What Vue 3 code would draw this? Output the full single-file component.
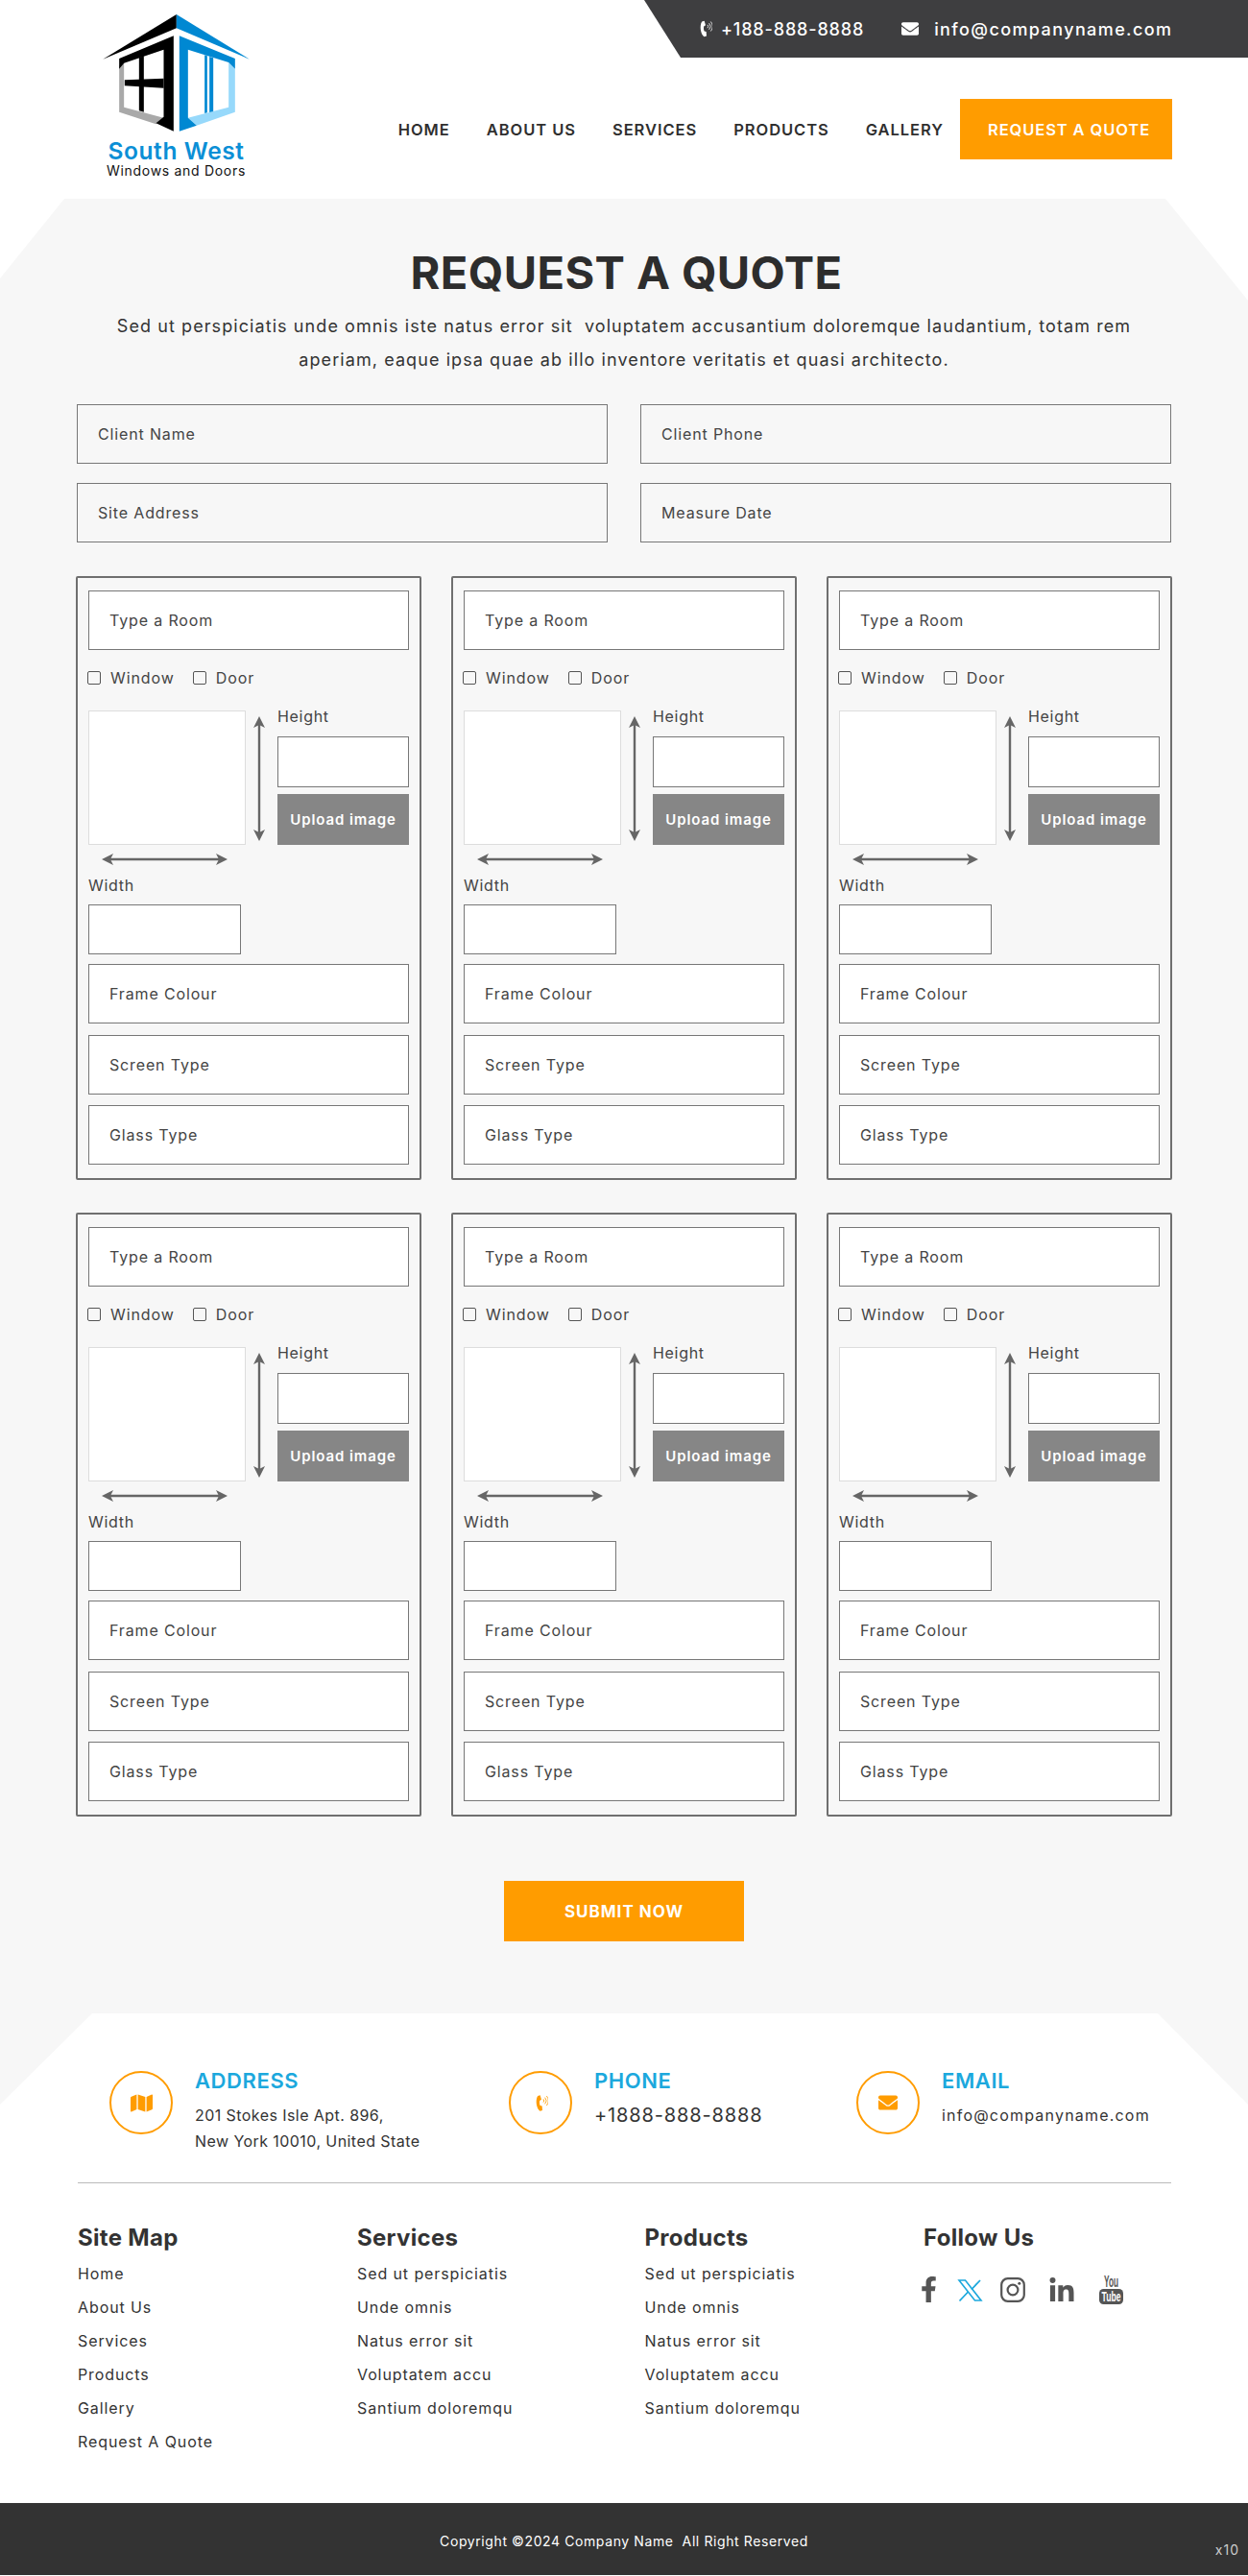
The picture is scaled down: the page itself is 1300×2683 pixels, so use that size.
<script setup>
const navItems = ["HOME", "ABOUT US", "SERVICES", "PRODUCTS", "GALLERY"];
const rooms = [1, 2, 3, 4, 5, 6];
const footerCols = [
  { title: "Site Map", links: ["Home", "About Us", "Services", "Products", "Gallery", "Request A Quote"] },
  { title: "Services", links: ["Sed ut perspiciatis", "Unde omnis", "Natus error sit", "Voluptatem accu", "Santium doloremqu"] },
  { title: "Products", links: ["Sed ut perspiciatis", "Unde omnis", "Natus error sit", "Voluptatem accu", "Santium doloremqu"] },
];
const envelope = "M502.3 190.8c3.9-3.1 9.7-.2 9.7 4.7V400c0 26.5-21.5 48-48 48H48c-26.5 0-48-21.5-48-48V195.6c0-5 5.7-7.8 9.7-4.7 22.4 17.4 52.1 39.5 154.1 113.6 21.1 15.4 56.7 47.8 92.2 47.6 35.7.3 72-32.8 92.3-47.6 102-74.1 131.6-96.3 154-113.7zM256 320c23.2.4 56.6-29.2 73.4-41.4 132.7-96.3 142.8-104.7 173.4-128.7 5.8-4.5 9.2-11.5 9.2-18.9v-19c0-26.5-21.5-48-48-48H48C21.5 64 0 85.5 0 112v19c0 7.4 3.4 14.3 9.2 18.9 30.6 23.9 40.7 32.4 173.4 128.7 16.8 12.2 50.2 41.8 73.4 41.4z";
const handset = "M5 1.5 L8 0.6 L9.6 6 L7.4 7.4 C7 9.5 7.2 11.8 8 13.6 L10.4 14 L10.8 19.4 L7.8 20.4 C3.4 17.6 1.6 6.6 5 1.5 Z";
</script>

<template>
  <div class="page">
    <header class="site-header">
      <div class="logo">
        <svg class="logo-mark" viewBox="82 45 458 366" width="153" height="122">
          <polygon points="312,45 312,88 82,185" fill="#000" />
          <polygon points="312,45 540,185 312,88" fill="#0088d2" />
          <polygon points="133,205 148,195 148,335 272,368 248,388 133,350" fill="#a9a9a9" />
          <polygon points="133,183 303,112 303,410 248,385 272,365 272,155 148,197 133,215" fill="#000" />
          <polygon points="195,180 210,175 210,350 195,346" fill="#000" />
          <polygon points="150,250 272,245 272,275 150,268" fill="#000" />
          <polygon points="495,215 495,350 375,392 348,368 475,335 475,195" fill="#97d9fb" />
          <polygon points="321,112 495,183 495,215 475,195 348,155 348,368 375,392 321,410" fill="#0088d2" />
          <polygon points="400,172 408,175 408,352 400,354" fill="#0088d2" />
          <polygon points="415,177 427,181 427,348 415,351" fill="#0088d2" />
        </svg>
        <div class="logo-name">South West</div>
        <div class="logo-sub">Windows and Doors</div>
      </div>
      <div class="header-right">
        <div class="topbar">
          <svg class="tb-phone" viewBox="0 0 18 21" width="15" height="18">
            <path :d="handset" fill="#fff" />
            <path d="M12 5.5a3 3 0 0 1 0 4M14 3.5a6 6 0 0 1 0 8M16 1.5a9 9 0 0 1 0 12" fill="none" stroke="#fff" stroke-width="1" />
          </svg>
          <span class="tb-text">+188-888-8888</span>
          <svg class="tb-mail" viewBox="0 0 512 512" width="18" height="18">
            <path :d="envelope" fill="#fff" />
          </svg>
          <span class="tb-text tb-email">info@companyname.com</span>
        </div>
        <nav class="nav">
          <a v-for="item in navItems" :key="item" class="nav-link">{{ item }}</a>
          <a class="nav-cta">REQUEST A QUOTE</a>
        </nav>
      </div>
    </header>

    <main class="quote">
      <h1 class="quote-title">REQUEST A QUOTE</h1>
      <p class="quote-text">
        Sed ut perspiciatis unde omnis iste natus error sit&nbsp; voluptatem accusantium doloremque laudantium, totam rem<br />
        aperiam, eaque ipsa quae ab illo inventore veritatis et quasi architecto.
      </p>
      <div class="client-fields">
        <input class="field field-clear" placeholder="Client Name" />
        <input class="field field-clear" placeholder="Client Phone" />
        <input class="field field-clear" placeholder="Site Address" />
        <input class="field field-clear" placeholder="Measure Date" />
      </div>
      <div class="rooms">
        <section v-for="room in rooms" :key="room" class="room">
          <input class="field" placeholder="Type a Room" />
          <div class="checks">
            <label class="check"><input type="checkbox" />Window</label>
            <label class="check"><input type="checkbox" />Door</label>
          </div>
          <div class="media">
            <div class="preview"></div>
            <svg class="arrow-v" viewBox="0 0 14 130" width="14" height="130">
              <path d="M7 4V126" stroke="#666" stroke-width="2.4" />
              <path d="M7 0L13 12L7 9L1 12ZM7 130L13 118L7 121L1 118Z" fill="#666" />
            </svg>
            <div class="height-col">
              <div class="dim-label height-label">Height</div>
              <input class="dim-input" />
              <button class="upload">Upload image</button>
            </div>
          </div>
          <svg class="arrow-h" viewBox="0 0 131 12" width="131" height="12">
            <path d="M4 6H127" stroke="#666" stroke-width="2.4" />
            <path d="M0 6L12 0L9 6L12 12ZM131 6L119 0L122 6L119 12Z" fill="#666" />
          </svg>
          <div class="dim-label width-label">Width</div>
          <input class="dim-input width-input" />
          <input class="field stacked first" placeholder="Frame Colour" />
          <input class="field stacked" placeholder="Screen Type" />
          <input class="field stacked" placeholder="Glass Type" />
        </section>
      </div>
      <button class="submit">SUBMIT NOW</button>
    </main>

    <footer class="footer-wrap">
      <div class="footer">
        <div class="info">
          <div class="info-item">
            <span class="info-icon">
              <svg viewBox="0 0 576 512" width="23" height="21"><path fill="#ff9c00" d="M0 117.66v346.32c0 11.32 11.43 19.06 21.94 14.86L160 416V32L20.12 87.95A32.006 32.006 0 0 0 0 117.66zM192 416l192 64V96L192 32v384zM554.06 33.16L416 96v384l139.88-55.95A31.996 31.996 0 0 0 576 394.34V48.02c0-11.32-11.43-19.06-21.94-14.86z" /></svg>
            </span>
            <div>
              <h3 class="info-title">ADDRESS</h3>
              <p class="info-text">201 Stokes Isle Apt. 896,<br />New York 10010, United State</p>
            </div>
          </div>
          <div class="info-item">
            <span class="info-icon">
              <svg viewBox="0 0 18 21" width="15" height="19">
                <path :d="handset" fill="#ff9c00" />
                <path d="M12 5.5a3 3 0 0 1 0 4M14 3.5a6 6 0 0 1 0 8M16 1.5a9 9 0 0 1 0 12" fill="none" stroke="#ff9c00" stroke-width="1" />
              </svg>
            </span>
            <div>
              <h3 class="info-title">PHONE</h3>
              <p class="info-phone">+1888-888-8888</p>
            </div>
          </div>
          <div class="info-item">
            <span class="info-icon">
              <svg viewBox="0 0 512 512" width="20" height="20"><path fill="#ff9c00" :d="envelope" /></svg>
            </span>
            <div>
              <h3 class="info-title">EMAIL</h3>
              <p class="info-text info-email">info@companyname.com</p>
            </div>
          </div>
        </div>
        <hr class="rule" />
        <div class="columns">
          <div v-for="col in footerCols" :key="col.title">
            <h4 class="col-title">{{ col.title }}</h4>
            <a v-for="link in col.links" :key="link" class="col-link">{{ link }}</a>
          </div>
          <div>
            <h4 class="col-title">Follow Us</h4>
            <div class="social">
              <svg class="s-f" viewBox="0 0 320 512" width="17" height="27"><path fill="#555" d="M279.14 288l14.22-92.66h-88.91v-60.13c0-25.35 12.42-50.06 52.24-50.06h40.42V6.26S260.43 0 225.36 0c-73.22 0-121.08 44.38-121.08 124.72v70.62H22.89V288h81.39v224h100.17V288z" /></svg>
              <svg class="s-x" viewBox="0 0 25 23" width="25" height="23">
                <path d="M1 1H7.5L24 22H17.5Z" fill="none" stroke="#1ca8dd" stroke-width="1.6" />
                <path d="M23 1L14 10.5M10.5 13L1.5 22.5" fill="none" stroke="#1ca8dd" stroke-width="1.8" />
              </svg>
              <svg class="s-i" viewBox="0 0 26 26" width="26" height="26">
                <rect x="1.2" y="1.2" width="23.6" height="23.6" rx="6.5" fill="none" stroke="#555" stroke-width="2.2" />
                <circle cx="13" cy="13" r="5.4" fill="none" stroke="#555" stroke-width="2.2" />
                <circle cx="19.8" cy="6.2" r="1.5" fill="#555" />
              </svg>
              <svg class="s-l" viewBox="0 0 448 448" width="26" height="25"><path fill="#555" d="M100.28 448H7.4V148.9h92.88zM53.79 108.1C24.09 108.1 0 83.5 0 53.8a53.79 53.79 0 0 1 107.58 0c0 29.7-24.1 54.3-53.79 54.3zM447.9 448h-92.68V302.4c0-34.7-.7-79.2-48.29-79.2-48.29 0-55.69 37.7-55.69 76.7V448h-92.78V148.9h89.08v40.8h1.3c12.4-23.5 42.69-48.3 87.88-48.3 94 0 111.28 61.9 111.28 142.3V448z" /></svg>
              <svg class="s-y" viewBox="0 0 25 30" width="25" height="30">
                <text x="12.5" y="12" text-anchor="middle" textLength="15" lengthAdjust="spacingAndGlyphs" font-family="Liberation Sans" font-size="16" font-weight="700" fill="#555">You</text>
                <rect x="0" y="14" width="25" height="16" rx="4.5" fill="#555" />
                <text x="12.5" y="27" text-anchor="middle" textLength="20" lengthAdjust="spacingAndGlyphs" font-family="Liberation Sans" font-size="15" font-weight="700" fill="#fff">Tube</text>
              </svg>
            </div>
          </div>
        </div>
      </div>
    </footer>

    <div class="copyright">
      Copyright ©2024 Company Name&nbsp; All Right Reserved
      <span class="x10">x10</span>
    </div>
  </div>
</template>

<style>
body {
  background: #fff;
}
</style>

<style scoped>
.page {
  width: 1300px;
  font-family: "Inter", "Open Sans", sans-serif;
  color: #333;
}

/* header */
.site-header {
  display: flex;
  height: 207px;
}
.logo {
  width: 153px;
  margin: 15px 0 0 107px;
  text-align: center;
}
.logo-mark {
  display: block;
}
.logo-name {
  margin-top: 6px;
  font-size: 24.5px;
  line-height: 28px;
  font-weight: 600;
  letter-spacing: 0.6px;
  color: #0b8fd6;
  white-space: nowrap;
}
.logo-sub {
  font-size: 14px;
  line-height: 14px;
  letter-spacing: 0.7px;
  color: #111;
  white-space: nowrap;
}
.header-right {
  margin-left: auto;
  width: 629px;
}
.topbar {
  display: flex;
  align-items: center;
  height: 60px;
  padding: 0 0 0 56px;
  background: #3e3e40;
  clip-path: polygon(0 0, 100% 0, 100% 100%, 38px 100%);
  color: #fff;
}
.tb-phone {
  margin-right: 9px;
}
.tb-mail {
  margin: 0 16px 0 39px;
}
.tb-text {
  font-size: 18px;
  font-weight: 500;
  letter-spacing: 0.85px;
  white-space: nowrap;
}
.tb-email {
  letter-spacing: 1.4px;
}
.nav {
  display: flex;
  align-items: center;
  height: 63px;
  margin: 43px 79px 0 0;
  justify-content: flex-end;
}
.nav-link {
  margin-right: 38px;
  font-size: 16.5px;
  font-weight: 600;
  letter-spacing: 0.95px;
  color: #2f2f2f;
  white-space: nowrap;
}
.nav-link:nth-child(5) {
  margin-right: 17px;
}
.nav-cta {
  display: flex;
  flex: none;
  align-items: center;
  box-sizing: border-box;
  width: 221px;
  height: 63px;
  padding-left: 29px;
  background: #ff9c00;
  color: #fff;
  font-size: 16.5px;
  font-weight: 600;
  letter-spacing: 0.9px;
  white-space: nowrap;
}

/* quote */
.quote {
  padding: 47px 80px 75px;
  background: #f7f7f7;
  clip-path: polygon(67px 0, 1214px 0, 100% 106px, 100% 100%, 0 100%, 0 83px);
  text-align: center;
}
.quote-title {
  margin: 0;
  padding-left: 5px;
  font-size: 47px;
  line-height: 60px;
  font-weight: 700;
  letter-spacing: 0.4px;
  color: #2d2d2d;
}
.quote-text {
  margin: 8px 0 0;
  font-size: 18px;
  line-height: 35px;
  letter-spacing: 1.08px;
  color: #333;
  white-space: nowrap;
}
.client-fields {
  display: grid;
  grid-template-columns: 553px 553px;
  justify-content: space-between;
  gap: 20px 34px;
  margin-top: 29px;
}
.field {
  display: block;
  box-sizing: border-box;
  width: 100%;
  height: 62px;
  padding: 0 21px;
  background: #fff;
  border: 1px solid #777;
  border-radius: 0;
  font-family: inherit;
  font-size: 16px;
  letter-spacing: 0.85px;
  outline: none;
}
.field-clear {
  background: transparent;
}
.field::placeholder {
  color: #444;
  opacity: 1;
}
.rooms {
  display: grid;
  grid-template-columns: repeat(3, 360px);
  justify-content: space-between;
  row-gap: 34px;
  margin: 35px -1px 0;
  text-align: left;
}
.room {
  box-sizing: border-box;
  height: 629px;
  padding: 13px 11px;
  border: 2px solid #6f6f6f;
  border-radius: 2px;
}
.checks {
  display: flex;
  gap: 19px;
  height: 22px;
  margin: 18px 0 0 -1px;
}
.check {
  display: flex;
  align-items: center;
  gap: 10px;
  font-size: 16px;
  letter-spacing: 0.9px;
  color: #444;
}
.check input {
  appearance: none;
  box-sizing: border-box;
  width: 14px;
  height: 14px;
  margin: 0;
  border: 1.5px solid #555;
  border-radius: 2px;
}
.media {
  display: grid;
  grid-template-columns: 164px 33px 137px;
  margin-top: 23px;
}
.preview {
  box-sizing: border-box;
  height: 140px;
  background: #fff;
  border: 1px solid #ddd;
}
.arrow-v {
  margin: 6px 0 0 7px;
}
.height-col {
  display: flex;
  flex-direction: column;
  height: 140px;
}
.dim-label {
  height: 20px;
  font-size: 16px;
  line-height: 20px;
  letter-spacing: 0.7px;
  color: #444;
}
.height-label {
  margin-top: -4px;
  margin-bottom: 11px;
}
.dim-input {
  display: block;
  box-sizing: border-box;
  height: 53px;
  width: 100%;
  flex: none;
  background: #fff;
  border: 1px solid #777;
  border-radius: 0;
  outline: none;
}
.upload {
  height: 53px;
  margin-top: 7px;
  padding: 0;
  background: #868686;
  border: none;
  color: #fff;
  font-family: inherit;
  font-size: 15px;
  font-weight: 600;
  letter-spacing: 0.9px;
}
.arrow-h {
  display: block;
  margin: 9px 0 0 14px;
}
.width-label {
  margin-top: 11px;
}
.width-input {
  width: 159px;
  height: 52px;
  margin-top: 10px;
}
.stacked {
  margin-top: 11.5px;
}
.stacked.first {
  margin-top: 10px;
}
.submit {
  display: block;
  width: 250px;
  height: 63px;
  margin: 67px auto 0;
  background: #ff9c00;
  border: none;
  color: #fff;
  font-family: inherit;
  font-size: 17px;
  font-weight: 700;
  letter-spacing: 1px;
}

/* footer */
.footer-wrap {
  background: #f7f7f7;
}
.footer {
  background: #fff;
  clip-path: polygon(96px 0, 1206px 0, 100% 95px, 100% 100%, 0 100%, 0 95px);
  padding: 60px 80px 46px 81px;
}
.info {
  display: grid;
  grid-template-columns: 416px 362px 1fr;
  height: 116px;
  padding-left: 33px;
}
.info-item {
  display: flex;
  gap: 23px;
}
.info-icon {
  display: flex;
  flex: none;
  align-items: center;
  justify-content: center;
  box-sizing: border-box;
  width: 66px;
  height: 66px;
  border: 2px solid #ff9c00;
  border-radius: 50%;
}
.info-title {
  margin: 0;
  font-size: 22px;
  line-height: 20px;
  font-weight: 600;
  letter-spacing: 0.6px;
  color: #1ca8dd;
}
.info-text {
  margin: 13px 0 0;
  font-size: 16px;
  line-height: 27px;
  letter-spacing: 0.43px;
  color: #333;
  white-space: nowrap;
}
.info-email {
  letter-spacing: 1.2px;
}
.info-phone {
  margin: 13px 0 0;
  font-size: 20px;
  line-height: 27px;
  letter-spacing: 0.85px;
  color: #333;
}
.rule {
  margin: 0;
  border: none;
  border-top: 1px solid #bbb;
}
.columns {
  display: grid;
  grid-template-columns: 291px 299.5px 290.5px 1fr;
  margin-top: 39px;
}
.col-title {
  margin: 0 0 1.5px;
  font-size: 24px;
  line-height: 36px;
  font-weight: 700;
  letter-spacing: 0.3px;
  color: #333;
}
.col-link {
  display: block;
  font-size: 16px;
  line-height: 35px;
  letter-spacing: 0.9px;
  color: #333;
}
.social {
  position: relative;
  height: 40px;
}
.social svg {
  position: absolute;
  overflow: visible;
}
.s-f { left: -3px; top: 20px; }
.s-x { left: 36px; top: 23px; }
.s-i { left: 80px; top: 21px; }
.s-l { left: 131px; top: 21px; }
.s-y { left: 183px; top: 19px; }

.copyright {
  position: relative;
  height: 75px;
  box-sizing: border-box;
  padding-top: 30px;
  background: #333;
  color: #fff;
  font-size: 14px;
  line-height: 20px;
  letter-spacing: 0.6px;
  text-align: center;
}
.x10 {
  position: absolute;
  right: 9px;
  top: 39px;
  color: #ccc;
  letter-spacing: 1px;
}
</style>
